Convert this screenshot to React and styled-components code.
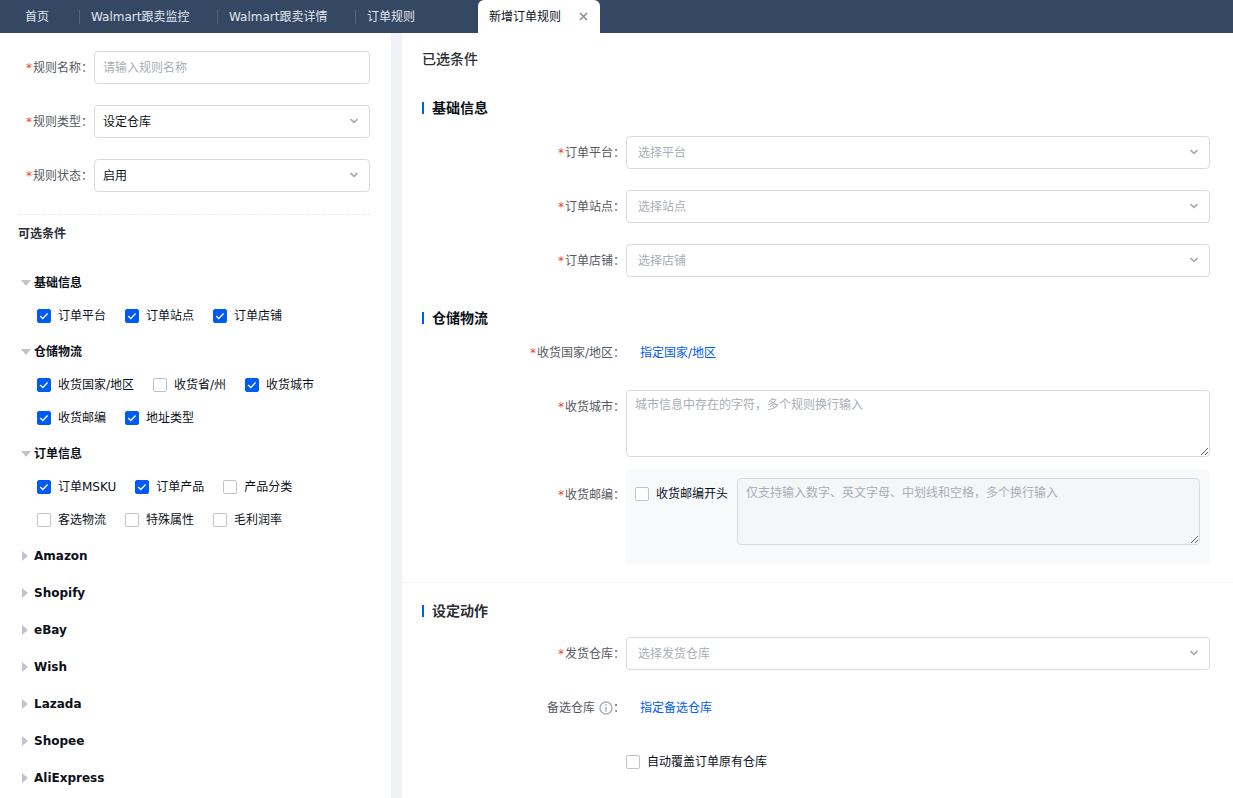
import React, { useState } from 'react';
import styled, { createGlobalStyle, css } from 'styled-components';

const tabs = [
  { name: '首页', width: 79 },
  { name: 'Walmart跟卖监控', width: 138 },
  { name: 'Walmart跟卖详情', width: 138 },
  { name: '订单规则', width: 123 },
];

const initialGroups = [
  {
    name: '基础信息',
    rows: [['订单平台', '订单站点', '订单店铺']],
  },
  {
    name: '仓储物流',
    rows: [
      ['收货国家/地区', '收货省/州', '收货城市'],
      ['收货邮编', '地址类型'],
    ],
  },
  {
    name: '订单信息',
    rows: [
      ['订单MSKU', '订单产品', '产品分类'],
      ['客选物流', '特殊属性', '毛利润率'],
    ],
  },
  { name: 'Amazon' },
  { name: 'Shopify' },
  { name: 'eBay' },
  { name: 'Wish' },
  { name: 'Lazada' },
  { name: 'Shopee' },
  { name: 'AliExpress' },
];

const initialChecked = [
  '订单平台',
  '订单站点',
  '订单店铺',
  '收货国家/地区',
  '收货城市',
  '收货邮编',
  '地址类型',
  '订单MSKU',
  '订单产品',
];

function SelectBox({ id, value, placeholder, wide }) {
  return (
    <SelectWrap>
      <Select id={id} $wide={wide} $empty={!value} defaultValue={value || ''}>
        <option value={value || ''}>{value || placeholder}</option>
      </Select>
      <Chevron viewBox="0 0 10 6" aria-hidden="true">
        <path d="M1.5 1.2L5 4.4l3.5-3.2" />
      </Chevron>
    </SelectWrap>
  );
}

function FieldLabel({ htmlFor, children, required = true }) {
  return (
    <Label htmlFor={htmlFor}>
      {required && <Star>*</Star>}
      {children}：
    </Label>
  );
}

function RuleSettings() {
  const [checked, setChecked] = useState(initialChecked);

  const toggle = (name) => {
    setChecked((prev) =>
      prev.includes(name) ? prev.filter((item) => item !== name) : [...prev, name]
    );
  };

  return (
    <Side>
      <SideForm>
        <SideField>
          <FieldLabel htmlFor="rule-name">规则名称</FieldLabel>
          <Input id="rule-name" type="text" placeholder="请输入规则名称" />
        </SideField>
        <SideField>
          <FieldLabel htmlFor="rule-type">规则类型</FieldLabel>
          <SelectBox id="rule-type" value="设定仓库" />
        </SideField>
        <SideField>
          <FieldLabel htmlFor="rule-status">规则状态</FieldLabel>
          <SelectBox id="rule-status" value="启用" />
        </SideField>
      </SideForm>
      <SideTitle>可选条件</SideTitle>
      {initialGroups.map((group) => (
        <Group key={group.name}>
          <GroupButton type="button" aria-expanded={!!group.rows}>
            <Caret viewBox="0 0 10 10" aria-hidden="true">
              {group.rows ? <path d="M0 2h10L5 8z" /> : <path d="M1 0v10l6-5z" />}
            </Caret>
            {group.name}
          </GroupButton>
          {group.rows && (
            <Options>
              {group.rows.map((row) => (
                <OptionRow key={row[0]}>
                  {row.map((name) => (
                    <CheckLabel key={name}>
                      <Checkbox
                        type="checkbox"
                        checked={checked.includes(name)}
                        onChange={() => toggle(name)}
                      />
                      {name}
                    </CheckLabel>
                  ))}
                </OptionRow>
              ))}
            </Options>
          )}
        </Group>
      ))}
    </Side>
  );
}

function SelectedConditions() {
  return (
    <Content>
      <Conditions>
        <PageTitle>已选条件</PageTitle>
        <SectionTitle>基础信息</SectionTitle>
        <Fields>
          <Field>
            <FieldLabel htmlFor="platform">订单平台</FieldLabel>
            <SelectBox id="platform" placeholder="选择平台" wide />
          </Field>
          <Field>
            <FieldLabel htmlFor="site">订单站点</FieldLabel>
            <SelectBox id="site" placeholder="选择站点" wide />
          </Field>
          <Field>
            <FieldLabel htmlFor="shop">订单店铺</FieldLabel>
            <SelectBox id="shop" placeholder="选择店铺" wide />
          </Field>
        </Fields>
        <SectionTitle>仓储物流</SectionTitle>
        <LinkField>
          <FieldLabel htmlFor="country">收货国家/地区</FieldLabel>
          <TextLink id="country" href="#country">指定国家/地区</TextLink>
        </LinkField>
        <AreaField>
          <FieldLabel htmlFor="city">收货城市</FieldLabel>
          <TextArea id="city" placeholder="城市信息中存在的字符，多个规则换行输入" />
        </AreaField>
        <AreaField $boxed>
          <FieldLabel htmlFor="zip">收货邮编</FieldLabel>
          <ZipBox>
            <ZipCheck>
              <Checkbox type="checkbox" />
              收货邮编开头
            </ZipCheck>
            <TextArea
              id="zip"
              $tinted
              placeholder="仅支持输入数字、英文字母、中划线和空格，多个换行输入"
            />
          </ZipBox>
        </AreaField>
      </Conditions>
      <Actions>
        <SectionTitle $soft>设定动作</SectionTitle>
        <Fields $tight>
          <Field>
            <FieldLabel htmlFor="warehouse">发货仓库</FieldLabel>
            <SelectBox id="warehouse" placeholder="选择发货仓库" wide />
          </Field>
          <Field>
            <FieldLabel htmlFor="backup" required={false}>
              备选仓库
              <InfoIcon viewBox="0 0 14 14" aria-hidden="true">
                <circle cx="7" cy="7" r="6" />
                <path d="M7 3.2v1.6M7 6v4.6" />
              </InfoIcon>
            </FieldLabel>
            <TextLink id="backup" href="#backup">指定备选仓库</TextLink>
          </Field>
          <Field>
            <span />
            <CheckLabel>
              <Checkbox type="checkbox" />
              自动覆盖订单原有仓库
            </CheckLabel>
          </Field>
        </Fields>
      </Actions>
    </Content>
  );
}

function App() {
  return (
    <Page>
      <GlobalStyle />
      <TabBar>
        {tabs.map((tab) => (
          <Tab key={tab.name} href="#tab" $width={tab.width}>
            {tab.name}
          </Tab>
        ))}
        <ActiveTab>
          新增订单规则
          <CloseButton type="button" aria-label="关闭">
            <svg width="9" height="9" viewBox="0 0 9 9" aria-hidden="true">
              <path d="M1 1l7 7M8 1L1 8" stroke="#8a8f99" strokeWidth="1.6" />
            </svg>
          </CloseButton>
        </ActiveTab>
      </TabBar>
      <Main>
        <RuleSettings />
        <SelectedConditions />
      </Main>
    </Page>
  );
}

export default App;

const GlobalStyle = createGlobalStyle`
  * {
    box-sizing: border-box;
  }
  body {
    margin: 0;
    background-color: #ffffff;
  }
  body, button, input, select, textarea {
    font-family: 'DejaVu Sans', 'Noto Sans CJK SC', sans-serif;
    font-size: 12px;
    line-height: 18px;
    color: #0b1019;
  }
`;

const Page = styled.div`
  display: flex;
  flex-direction: column;
  min-height: 100vh;
`;

const TabBar = styled.nav`
  display: flex;
  height: 33px;
  background-color: #344864;
`;

const Tab = styled.a`
  display: flex;
  align-items: center;
  width: ${(props) => props.$width}px;
  padding-left: 12px;
  color: #e1e5ec;
  text-decoration: none;
  white-space: nowrap;
  background: linear-gradient(#56647d, #56647d) left center / 1px 14px no-repeat;
  &:first-child {
    padding-left: 25px;
    background: none;
  }
`;

const ActiveTab = styled.div`
  display: flex;
  align-items: center;
  justify-content: space-between;
  width: 122px;
  padding: 0 12px 0 11px;
  border-radius: 6px 6px 0 0;
  background-color: #ffffff;
  white-space: nowrap;
`;

const CloseButton = styled.button`
  display: flex;
  padding: 0;
  border: none;
  background: none;
  cursor: pointer;
`;

const Main = styled.main`
  display: flex;
  flex: 1;
`;

const Side = styled.aside`
  flex: none;
  width: 402px;
  padding: 18px 21px 0 18px;
  border-right: 11px solid #f0f2f6;
`;

const SideForm = styled.div`
  display: flex;
  flex-direction: column;
  gap: 21px;
  padding-bottom: 22px;
  border-bottom: 1px dashed #e9ebee;
`;

const SideField = styled.div`
  display: grid;
  grid-template-columns: 76px 1fr;
`;

const Label = styled.label`
  display: flex;
  align-items: center;
  justify-content: flex-end;
  height: 33px;
  padding-right: 1px;
  color: #55585f;
  white-space: nowrap;
`;

const Star = styled.span`
  margin-right: 1px;
  color: #e8452f;
`;

const control = css`
  width: 100%;
  border: 1px solid #d9dbdf;
  border-radius: 4px;
  background-color: #ffffff;
  outline: none;
  &::placeholder {
    color: #a9adb6;
  }
`;

const Input = styled.input`
  ${control}
  height: 33px;
  padding: 0 8px;
`;

const SelectWrap = styled.div`
  position: relative;
  display: flex;
`;

const Select = styled.select`
  ${control}
  appearance: none;
  height: 33px;
  padding: 0 32px 0 ${(props) => (props.$wide ? '11px' : '8px')};
  color: ${(props) => (props.$empty ? '#a9adb6' : '#0b1019')};
`;

const Chevron = styled.svg`
  position: absolute;
  top: 13px;
  right: 11px;
  width: 10px;
  height: 6px;
  fill: none;
  stroke: #a3aab6;
  stroke-width: 1.7;
  pointer-events: none;
`;

const SideTitle = styled.h2`
  margin: 10px 0 23px;
  font-size: 12px;
  line-height: 18px;
  font-weight: 600;
  color: #2b2f36;
`;

const Group = styled.section`
  margin-bottom: 3px;
`;

const GroupButton = styled.button`
  display: flex;
  align-items: center;
  gap: 3px;
  height: 34px;
  padding: 0 0 0 3px;
  border: none;
  background: none;
  font-weight: 700;
  cursor: pointer;
`;

const Caret = styled.svg`
  width: 10px;
  height: 10px;
  fill: #bfc3cb;
`;

const Options = styled.div`
  display: flex;
  flex-direction: column;
  gap: 1px;
  padding-left: 19px;
`;

const OptionRow = styled.div`
  display: flex;
  gap: 19px;
  height: 32px;
`;

const CheckLabel = styled.label`
  display: flex;
  align-items: center;
  gap: 7px;
  white-space: nowrap;
`;

const Checkbox = styled.input`
  appearance: none;
  flex: none;
  width: 14px;
  height: 14px;
  margin: 0;
  border: 1px solid #bfc3cb;
  border-radius: 2px;
  background-color: #ffffff;
  &:checked {
    border-color: #005bf5;
    background: #005bf5
      url("data:image/svg+xml,%3Csvg xmlns='http://www.w3.org/2000/svg' viewBox='0 0 12 12'%3E%3Cpath d='M2.2 6l2.6 2.5 4.8-5' fill='none' stroke='white' stroke-width='1.3'/%3E%3C/svg%3E")
      center / 12px 12px no-repeat;
  }
`;

const Content = styled.div`
  flex: 1;
  min-width: 0;
`;

const Conditions = styled.section`
  padding: 16px 23px 18px 20px;
  border-bottom: 1px solid #f2f4f6;
`;

const Actions = styled.section`
  padding: 18px 23px 20px 20px;
`;

const PageTitle = styled.h1`
  margin: 0 0 29px;
  font-size: 14px;
  line-height: 20px;
  font-weight: 500;
  color: #2b2f36;
`;

const SectionTitle = styled.h2`
  display: flex;
  align-items: center;
  gap: 8px;
  margin: 0;
  font-size: 14px;
  line-height: 20px;
  font-weight: 600;
  color: ${(props) => (props.$soft ? '#2b2f36' : '#0b1019')};
  &::before {
    content: '';
    width: 2px;
    height: 12px;
    background-color: #005bf5;
  }
`;

const Fields = styled.div`
  display: flex;
  flex-direction: column;
  gap: 21px;
  padding: ${(props) => (props.$tight ? '16px' : '18px')} 0 31px;
`;

const Field = styled.div`
  display: grid;
  grid-template-columns: 204px 1fr;
  min-height: 33px;
`;

const LinkField = styled(Field)`
  padding: 8px 0 21px;
`;

const AreaField = styled(Field)`
  margin-top: ${(props) => (props.$boxed ? '13px' : '0')};
  ${(props) =>
    props.$boxed &&
    css`
      ${Label} {
        margin-top: 8px;
      }
    `}
`;

const TextLink = styled.a`
  align-self: center;
  justify-self: start;
  margin-left: 14px;
  color: #005bf5;
  text-decoration: none;
`;

const TextArea = styled.textarea`
  ${control}
  display: block;
  height: 67px;
  padding: 5px 8px;
  resize: vertical;
  background-color: ${(props) => (props.$tinted ? '#f4f6fa' : '#ffffff')};
`;

const ZipBox = styled.div`
  display: flex;
  align-items: flex-start;
  gap: 9px;
  height: 94px;
  padding: 8px 10px 19px 9px;
  border-radius: 4px;
  background-color: #f8f9fb;
`;

const ZipCheck = styled(CheckLabel)`
  height: 32px;
`;

const InfoIcon = styled.svg`
  width: 14px;
  height: 14px;
  margin-left: 4px;
  fill: none;
  stroke: #a9b1c0;
  stroke-width: 1.5;
`;
